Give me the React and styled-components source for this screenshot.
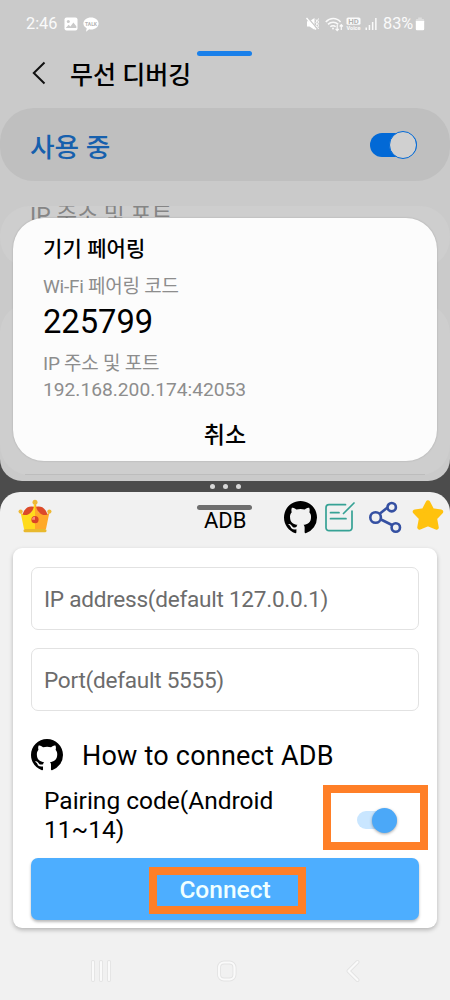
import React from 'react';
import styled, { createGlobalStyle } from 'styled-components';

const App = () => {
    return (
        <Phone>
            <GlobalStyle />
            <SettingsPane>
                <StatusBar>
                    <Clock>2:46</Clock>
                    <PictureIcon />
                    <TalkIcon />
                    <StatusRight>
                        <MuteIcon />
                        <WifiIcon />
                        <VoiceIcon />
                        <SignalIcon />
                        <Percent>83%</Percent>
                        <BatteryIcon />
                    </StatusRight>
                </StatusBar>
                <PaneHandle $top={51} $color="#1a80ea" />
                <TitleBar>
                    <svg width="14" height="24" viewBox="0 0 14 24" fill="none" stroke="#111" strokeWidth="2">
                        <path d="M12.5 1.5L1.8 12l10.7 10.5" />
                    </svg>
                    <h1>무선 디버깅</h1>
                </TitleBar>
                <UsageRow>
                    <span>사용 중</span>
                    <UsageSwitch><UsageThumb /></UsageSwitch>
                </UsageRow>
                <AddressCard>IP 주소 및 포트</AddressCard>
                <DeviceCard><DeviceLine /></DeviceCard>
                <Dialog>
                    <DialogTitle>기기 페어링</DialogTitle>
                    <Label>Wi-Fi 페어링 코드</Label>
                    <Code>225799</Code>
                    <Label>IP 주소 및 포트</Label>
                    <Address>192.168.200.174:42053</Address>
                    <Cancel>취소</Cancel>
                </Dialog>
            </SettingsPane>
            <Divider><Dot /><Dot /><Dot /></Divider>
            <AdbPane>
                <PaneHandle $top={13} $color="#6e6e6e" />
                <Toolbar>
                    <CrownIcon />
                    <ToolbarTitle>ADB</ToolbarTitle>
                    <ToolbarIcons>
                        <GithubIcon size={33} />
                        <NoteIcon />
                        <ShareIcon />
                        <StarIcon />
                    </ToolbarIcons>
                </Toolbar>
                <Card>
                    <Field>IP address(default 127.0.0.1)</Field>
                    <Field>Port(default 5555)</Field>
                    <HowTo>
                        <GithubIcon size={32} />
                        <span>How to connect ADB</span>
                    </HowTo>
                    <PairingRow>
                        <PairingText>Pairing code(Android 11~14)</PairingText>
                        <SwitchFrame>
                            <Switch><Thumb /></Switch>
                        </SwitchFrame>
                    </PairingRow>
                    <ConnectButton>
                        <ConnectFrame>Connect</ConnectFrame>
                    </ConnectButton>
                </Card>
                <NavBar>
                    <RecentsIcon />
                    <HomeIcon />
                    <BackIcon />
                </NavBar>
            </AdbPane>
        </Phone>
    );
};

const PictureIcon = () => (
    <svg width="14" height="14" viewBox="0 0 14 14">
        <rect x="0.5" y="0.5" width="13" height="13" rx="2" fill="#fff" />
        <circle cx="4.3" cy="4.4" r="1.5" fill="#cacaca" />
        <path d="M1.8 11l2.8-3.2 1.8 1.6 3-3.9 2.9 3.7V11z" fill="#cacaca" />
    </svg>
);

const TalkIcon = () => (
    <svg width="16" height="15" viewBox="0 0 16 15">
        <path d="M8 0.5c4.2 0 7.6 2.6 7.6 6s-3.4 6-7.6 6c-.6 0-1.2-.1-1.8-.2L3 14.7l.7-3.4C1.7 10.2.4 8.5.4 6.5c0-3.4 3.4-6 7.6-6z" fill="#fff" />
        <text x="8" y="8.5" fontSize="5" fontWeight="700" textAnchor="middle" fill="#b5b5b5">TALK</text>
    </svg>
);

const MuteIcon = () => (
    <svg width="14" height="14" viewBox="0 0 14 14" fill="#fff" stroke="#fff">
        <path d="M1 4.3h2.500L8.500 1v11.800L3.500 9.500H1z" stroke="none" />
        <path d="M1.500 0.500l9 10.500" stroke="#cacaca" strokeWidth="1.600" />
        <path d="M0.500 1l9.500 11.500" strokeWidth="1.400" />
        <path d="M10 2.500l1 1.500-1 1.500 1 1.500-1 1.500 1 1.500M12.500 1.500l-.8 1.800.8 1.700-.8 1.800.8 1.700-.8 1.800.8 1.700" fill="none" strokeWidth="1" />
    </svg>
);

const WifiIcon = () => (
    <svg width="19" height="15" viewBox="0 0 19 15" fill="none" stroke="#fafafa" strokeWidth="1.500">
        <path d="M0.800 5C5 .4 11.500.4 15.500 5M3 7.400c3-3 7.200-3 10.200 0M5.300 9.800c1.500-1.500 4-1.500 5.400 0" />
        <circle cx="8" cy="11.500" r="1" fill="#fafafa" stroke="none" />
        <path d="M12.200 8v5.500M10.600 11.800l1.600 1.800 1.600-1.800M16.300 13V7.800M14.700 9.500l1.600-1.800 1.600 1.800" strokeWidth="1.200" />
    </svg>
);

const VoiceIcon = () => (
    <svg width="15" height="14" viewBox="0 0 15 14">
        <rect x="0.500" y="0.500" width="14" height="7.300" rx="1.600" fill="#fafafa" />
        <text x="7.500" y="6.700" fontSize="7" fontWeight="700" textAnchor="middle" textLength="10.500" lengthAdjust="spacingAndGlyphs" fill="#b5b5b5">HD</text>
        <text x="7.500" y="13" fontSize="6" fontWeight="700" textAnchor="middle" textLength="14" lengthAdjust="spacingAndGlyphs" fill="#fafafa">Voice</text>
    </svg>
);

const SignalIcon = () => (
    <svg width="12" height="14" viewBox="0 0 12 14" fill="#fafafa">
        <rect x="0.500" y="10.500" width="1.500" height="2.500" />
        <rect x="3.700" y="8" width="1.500" height="5" />
        <rect x="6.900" y="5" width="1.500" height="8" />
        <rect x="10.100" y="1" width="1.500" height="12" />
    </svg>
);

const BatteryIcon = () => (
    <svg width="10" height="14" viewBox="0 0 10 14">
        <path d="M3.200 0.500h3.600V2H8a1.200 1.200 0 011.200 1.200V5H.8V3.200A1.200 1.200 0 012 2h1.200z" fill="#dedede" />
        <path d="M0.800 4h8.400v8a1.200 1.200 0 01-1.200 1.200H2A1.200 1.200 0 01.8 12z" fill="#fff" />
    </svg>
);

const GithubIcon = ({ size }) => (
    <svg width={size} height={size} viewBox="0 0 16 16">
        <path d="M8 0C3.58 0 0 3.58 0 8c0 3.54 2.29 6.53 5.47 7.59.4.07.55-.17.55-.38 0-.19-.01-.82-.01-1.49-2.01.37-2.53-.49-2.69-.94-.09-.23-.48-.94-.82-1.13-.28-.15-.68-.52-.01-.53.63-.01 1.08.58 1.23.82.72 1.21 1.87.87 2.33.66.07-.52.28-.87.51-1.07-1.78-.2-3.64-.89-3.64-3.95 0-.87.31-1.59.82-2.15-.08-.2-.36-1.02.08-2.12 0 0 .67-.21 2.2.82.64-.18 1.32-.27 2-.27.68 0 1.36.09 2 .27 1.53-1.04 2.2-.82 2.2-.82.44 1.1.16 1.92.08 2.12.51.56.82 1.27.82 2.15 0 3.07-1.87 3.75-3.65 3.95.29.25.54.73.54 1.48 0 1.07-.01 1.93-.01 2.2 0 .21.15.46.55.38A8.013 8.013 0 0016 8c0-4.42-3.58-8-8-8z" />
    </svg>
);

const CrownIcon = () => (
    <svg width="34" height="36" viewBox="0 0 34 36">
        <path d="M2.400 12.500C3.500 15 4.500 15 6 14.500l11-1V30H6z" fill="#ffdb1c" />
        <path d="M31.600 12.500c-1.100 2.500-2.100 2.500-3.600 2l-11-1V30h11z" fill="#ffa929" />
        <path d="M17 3l-4 11 2 5h2z" fill="#ffdb1c" />
        <path d="M17 3l4 11-2 5h-2z" fill="#ffa929" />
        <path d="M4.500 15.500C6.500 9 11 6.500 15.800 8 14.500 13.500 10 17.500 4.500 15.500z" fill="#dc4a29" />
        <path d="M29.500 15.500C27.500 9 23 6.500 18.200 8c1.300 5.500 5.800 9.500 11.300 7.500z" fill="#dc4a29" />
        <circle cx="17" cy="3.200" r="2.500" fill="#eeb937" />
        <circle cx="2.600" cy="12.600" r="2.100" fill="#eeb937" />
        <circle cx="31.400" cy="12.600" r="2.100" fill="#eeb937" />
        <rect x="5.500" y="30" width="23" height="3.200" rx="1.500" fill="#e9b92d" />
        <circle cx="17" cy="20.700" r="3.600" fill="#d94426" />
        <path d="M14 20.700a3 3 0 013-3v3z" fill="#ff8a75" />
    </svg>
);

const NoteIcon = () => (
    <svg width="30" height="30" viewBox="0 0 30 30" fill="none" stroke="#36a295" strokeWidth="1.700" strokeLinecap="round">
        <path d="M20.500 2.700H4a3 3 0 00-3 3v20a3 3 0 003 3h20a3 3 0 003-3V9M5.500 10.700h8.500M5.500 16.700h15.500M29 1L18.500 11.500" />
    </svg>
);

const ShareIcon = () => (
    <svg width="34" height="32" viewBox="0 0 34 32" fill="none" stroke="#3550a2" strokeWidth="2.600">
        <path d="M11 12.500l7.500-6M12 18.500l11 5.500" />
        <circle cx="6.600" cy="16.500" r="5.300" />
        <circle cx="22.700" cy="6.200" r="4.200" />
        <circle cx="26.800" cy="26.500" r="4.200" />
    </svg>
);

const StarIcon = () => (
    <svg width="32" height="36" viewBox="0 0 32 36">
        <path d="M16 3.500l4.200 8 8.800 1.200-6.200 6.500 1.700 9.300-8.500-3.500-8.500 3.500 1.700-9.300L3 12.700l8.800-1.200z" fill="#ffc20e" stroke="#ffc20e" strokeWidth="4.500" strokeLinejoin="round" />
    </svg>
);

// white glyph on top of a wider grey stroke, like the system navigation bar
const NavGlyph = ({ d }) => (
    <svg width="24" height="24" viewBox="0 0 24 24" fill="none" strokeLinecap="round" strokeLinejoin="round">
        <path d={d} stroke="#e3e3e3" strokeWidth="4" />
        <path d={d} stroke="#fafafa" strokeWidth="2.200" />
    </svg>
);

const RecentsIcon = () => <NavGlyph d="M4 3v18M12 3v18M20 3v18" />;
const HomeIcon = () => <NavGlyph d="M9 3.500h5.500a5 5 0 015 5v7a5 5 0 01-5 5H9a5 5 0 01-5-5v-7a5 5 0 015-5z" />;
const BackIcon = () => <NavGlyph d="M17.500 3L8.500 12l9 9" />;

const GlobalStyle = createGlobalStyle`
    body{
        margin: 0;
    }
    *{
        box-sizing: border-box;
    }
    svg{
        display: block;
        flex: none;
    }
`;

const Phone = styled.div`
    width: 450px;
    height: 1000px;
    display: flex;
    flex-direction: column;
    overflow: hidden;
    background: #4c4c4c;
    color: #000;
    font-family: Roboto, "Noto Sans CJK KR", sans-serif;
`;

const SettingsPane = styled.section`
    position: relative;
    height: 481px;
    flex: none;
    overflow: hidden;
    border-radius: 0 0 22px 22px;
    background: #cacaca;
`;

const StatusBar = styled.div`
    display: flex;
    align-items: center;
    gap: 5px;
    height: 48px;
    padding: 0 25px 0 26px;
    color: #fafafa;
    font-size: 16.3px;
`;

const Clock = styled.span`
    margin: -1px 2px 0 0;
`;

const StatusRight = styled.div`
    display: grid;
    grid-template-columns: 19px 21px 19px 18px 32px 10px;
    align-items: center;
    margin-left: auto;
`;

const Percent = styled.span`
    margin-top: -1px;
`;

const PaneHandle = styled.div`
    position: absolute;
    left: 197px;
    top: ${({ $top }) => $top}px;
    width: 55px;
    height: 5px;
    border-radius: 3px;
    background: ${({ $color }) => $color};
`;

const TitleBar = styled.div`
    display: flex;
    align-items: center;
    gap: 24px;
    height: 50px;
    padding-left: 32px;
    h1{
        margin: 5px 0 0;
        font-size: 25px;
        font-weight: 500;
        line-height: 36px;
    }
`;

const UsageRow = styled.div`
    display: flex;
    align-items: center;
    justify-content: space-between;
    height: 73px;
    margin-top: 10px;
    padding: 2px 33px 0 30px;
    border-radius: 34px;
    background: #bfbfbf;
    color: #1660ad;
    font-size: 26.7px;
    font-weight: 500;
`;

const UsageSwitch = styled.div`
    display: flex;
    align-items: center;
    justify-content: flex-end;
    width: 47px;
    height: 24px;
    margin-top: -2px;
    border-radius: 12px;
    background: #0269d6;
`;

const UsageThumb = styled.div`
    flex: none;
    width: 28px;
    height: 28px;
    border: 1px solid #0269d6;
    border-radius: 50%;
    background: #d0d0d0;
`;

const AddressCard = styled.div`
    height: 62px;
    margin-top: 25px;
    padding-left: 30px;
    overflow: hidden;
    border-radius: 30px;
    background: #cecece;
    color: #858585;
    font-size: 22.8px;
    line-height: 19px;
`;

const DeviceCard = styled.div`
    height: 172px;
    margin-top: 35px;
    padding: 171px 25px 0;
    border-radius: 30px;
    background: #cecece;
`;

const DeviceLine = styled.div`
    height: 1px;
    background: #bdbdbd;
`;

const Dialog = styled.div`
    position: absolute;
    left: 13px;
    top: 218px;
    width: 424px;
    height: 243px;
    display: flex;
    flex-direction: column;
    padding: 16px 30px 0;
    border-radius: 31px;
    background: #fcfcfc;
    box-shadow: 0 0 2px rgba(0,0,0,0.2);
`;

const DialogTitle = styled.div`
    font-size: 21px;
    font-weight: 500;
    line-height: 30px;
    letter-spacing: 0.1px;
`;

const Label = styled.div`
    margin-top: 9px;
    color: #8d8d8d;
    font-size: 19px;
    line-height: 27px;
    letter-spacing: -0.25px;
`;

const Code = styled.div`
    margin-top: 3px;
    font-size: 32.7px;
    line-height: 38px;
`;

const Address = styled.div`
    color: #8d8d8d;
    font-size: 19.2px;
    line-height: 26px;
`;

const Cancel = styled.div`
    margin-top: 16px;
    font-size: 23px;
    font-weight: 500;
    line-height: 34px;
    text-align: center;
`;

const Divider = styled.div`
    display: flex;
    align-items: center;
    justify-content: center;
    gap: 8px;
    height: 11px;
    flex: none;
`;

const Dot = styled.span`
    width: 5px;
    height: 5px;
    border-radius: 50%;
    background: #d8d8d8;
`;

const AdbPane = styled.section`
    position: relative;
    flex: 1;
    border-radius: 20px 20px 0 0;
    background: #f1f1f1;
`;

const Toolbar = styled.div`
    display: flex;
    align-items: center;
    justify-content: space-between;
    height: 56px;
    padding: 0 6px 6px 18px;
`;

const ToolbarTitle = styled.div`
    flex: 1;
    padding: 7px 0 0 152px;
    font-size: 22px;
    line-height: 26px;
`;

const ToolbarIcons = styled.div`
    display: grid;
    grid-template-columns: 41px 44px 43px 32px;
    align-items: center;
`;

const Card = styled.div`
    width: 424px;
    height: 380px;
    margin: 0 auto;
    padding: 19px 18px 0;
    border-radius: 9px;
    background: #fff;
    box-shadow: 0 2px 4px rgba(0,0,0,0.25);
`;

const Field = styled.div`
    height: 63px;
    margin-bottom: 18px;
    padding-left: 12px;
    border: 1px solid #e2e2e2;
    border-radius: 7px;
    color: #6c6c6c;
    font-size: 22.6px;
    line-height: 64px;
    letter-spacing: -0.27px;
`;

const HowTo = styled.div`
    display: flex;
    align-items: center;
    gap: 19px;
    height: 56px;
    padding-bottom: 5px;
    font-size: 27px;
    letter-spacing: 0.22px;
    span{
        padding-top: 3px;
    }
`;

const PairingRow = styled.div`
    display: flex;
    justify-content: space-between;
    height: 73px;
    margin-right: -9px;
    padding-left: 13px;
`;

const PairingText = styled.div`
    width: 250px;
    padding-top: 1px;
    font-size: 24.5px;
    line-height: 29px;
`;

const SwitchFrame = styled.div`
    display: flex;
    align-items: center;
    width: 105px;
    height: 65px;
    padding: 5px 0 0 26px;
    border: 8px solid #ff7f27;
`;

const Switch = styled.div`
    display: flex;
    align-items: center;
    justify-content: flex-end;
    width: 40px;
    height: 18px;
    border-radius: 9px;
    background: #c9e6ff;
`;

const Thumb = styled.div`
    flex: none;
    width: 25px;
    height: 25px;
    border-radius: 50%;
    background: #4ba8f8;
    box-shadow: 0 1px 3px rgba(0,0,0,0.35);
`;

const ConnectButton = styled.div`
    display: flex;
    align-items: center;
    justify-content: center;
    height: 62px;
    padding-top: 3px;
    border-radius: 7px;
    background: #4daeff;
    box-shadow: 0 2px 3px rgba(0,0,0,0.28);
`;

const ConnectFrame = styled.div`
    width: 157px;
    height: 47px;
    margin-left: 5px;
    padding-right: 5px;
    border: 8px solid #ff7f27;
    color: #f0ffff;
    font-size: 24.5px;
    font-weight: 500;
    line-height: 30px;
    text-align: center;
`;

const NavBar = styled.div`
    display: flex;
    justify-content: space-between;
    padding: 31px 86px 0 89px;
`;

export default App;
